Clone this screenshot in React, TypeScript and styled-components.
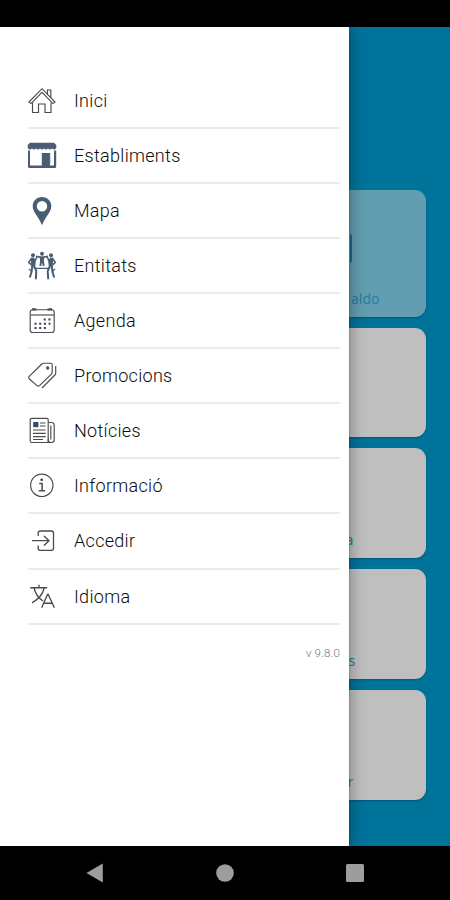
import React from "react";
import styled, { createGlobalStyle } from "styled-components";

const GlobalStyle = createGlobalStyle`
  * { box-sizing: border-box; }
  body { margin: 0; background: #000; font-family: Roboto, "Noto Sans", sans-serif; }
`;

const Screen = styled.div`
  display: flex;
  flex-direction: column;
  width: 450px;
  height: 900px;
  background: #000;
  overflow: hidden;
`;

const StatusBar = styled.header`
  flex: 0 0 27px;
`;

const Main = styled.main`
  display: flex;
  flex: 0 0 819.4px;
  overflow: hidden;
  background: #00739b;
`;

const Drawer = styled.nav`
  position: relative;
  z-index: 1;
  flex: 0 0 349px;
  padding: 46.8px 9px 0 28px;
  background: #fff;
  box-shadow: 0 0 16px rgba(0, 0, 0, 0.38), 0 0 2px rgba(0, 0, 0, 0.3);
`;

const Menu = styled.ul`
  margin: 0;
  padding: 0;
  list-style: none;
`;

const MenuRow = styled.li`
  display: flex;
  align-items: center;
  gap: 18px;
  height: 55.08px;
  padding-top: 1px;
  border-bottom: 2px solid #ebebeb;
`;

const Icon = styled.svg`
  flex: none;
  width: 28px;
  height: 28px;
  overflow: visible;
  fill: none;
  stroke: #4b4b4b;
  stroke-width: 1.15;
`;

const Label = styled.span`
  color: #0c0c0c;
  font-size: 18px;
  font-weight: 300;
  line-height: 24px;
  letter-spacing: 0.3px;
`;

const Version = styled.div`
  margin-top: 20.5px;
  color: #777;
  font-size: 11.5px;
  font-weight: 300;
  line-height: 16px;
  letter-spacing: 0.15px;
  text-align: right;
`;

const Cards = styled.section`
  display: flex;
  flex: 1;
  flex-direction: column;
  gap: 11px;
  padding-top: 163.3px;
`;

const Card = styled.article<{ $featured?: boolean }>`
  display: flex;
  flex-direction: column;
  justify-content: flex-end;
  width: 76.5px;
  height: ${(p) => (p.$featured ? 126.5 : 109.7)}px;
  padding: 0 0 9px 1px;
  border-radius: 0 11px 11px 0;
  background: ${(p) => (p.$featured ? "#639db1" : "#bfbfbf")};
  box-shadow: 0 1px 2px rgba(0, 35, 60, 0.35);
`;

const CardMark = styled.i`
  width: 2px;
  height: 29px;
  margin-bottom: 26px;
  border-radius: 0 2px 2px 0;
  background: #126f91;
`;

const CardLabel = styled.span<{ $featured?: boolean; $shift: number }>`
  margin-left: ${(p) => p.$shift}px;
  color: ${(p) => (p.$featured ? "#277f9e" : "#267c9b")};
  font-family: "Noto Sans", sans-serif;
  font-size: 14px;
  line-height: 19px;
`;

const NavBar = styled.footer`
  display: flex;
  flex: 1;
  align-items: center;
  justify-content: center;
  gap: 112px;
`;

const NavGlyph = styled.svg`
  width: 18px;
  height: 20px;
  fill: #9d9d9d;
`;

const Home = () => (
  <>
    <path d="M1 15 14 1.7 27 15l-2 1.6L14 5.3 3 16.6Z" />
    <path d="M4.5 15.5V25.5h6v-8.5h6.5v8.5h6V15.5M19.5 7.5V3h3.3v8" />
  </>
);

const Store = () => (
  <g fill="#4b5d73" stroke="none">
    <path d="M2 .7h24l2.3 2.2v2.7a2.3 2.3 0 0 1-4.3.7 2.2 2.2 0 0 1-4 0 2.2 2.2 0 0 1-4 0 2.2 2.2 0 0 1-4 0 2.2 2.2 0 0 1-4 0 2.2 2.2 0 0 1-4 0A2.3 2.3 0 0 1-.3 5.6V2.9Z" />
    <path fillRule="evenodd" d="M0 8.5h2v15h11.8V11H22v12.5h4V8.5h2.2v16a1.5 1.5 0 0 1-1.5 1.5H1.5A1.5 1.5 0 0 1 0 24.5Z" />
    <path stroke="#b7c0ca" strokeWidth=".8" d="M22.3 11v11" />
  </g>
);

const Pin = () => (
  <path
    fill="#4b5d73"
    stroke="none"
    fillRule="evenodd"
    d="M14 0c5.3 0 9.3 4 9.3 9.2 0 6.4-5.7 9.4-9.3 19-3.6-9.6-9.3-12.6-9.3-19C4.7 4 8.7 0 14 0Zm0 4a5.2 5.2 0 1 0 0 10.4A5.2 5.2 0 0 0 14 4Z"
  />
);

const People = () => (
  <g stroke="#4b5d73" strokeLinejoin="round">
    <g fill="#4b5d73" stroke="none">
      <circle cx="14" cy="1.7" r="2" />
      <circle cx="5" cy="3.3" r="2" />
      <circle cx="23" cy="3.3" r="2" />
      <path d="M11.5 4.2h5l-.6 4.8.7 5h-1.8L14 10.5l-.8 3.5h-1.8l.7-5ZM2.5 5.8l3.3-.2 2 3.4-.5 5-4 1.2L3 10ZM25.5 5.8l-3.3-.2-2 3.4.5 5 4 1.2L25 10Z" />
    </g>
    <path strokeWidth="1.6" d="m12 5-4-.8M16 5l4-.8M3 7l-2.3 3.4L3.4 13M25 7l2.3 3.4-2.7 2.6M7 9.2l2-5M21 9.2l-2-5" />
    <path strokeWidth="2" d="m4.3 14-.8 6-1.7 5.5M6 14l2.3 5-.5 8.3M23.7 14l.8 6 1.7 5.5M22 14l-2.3 5 .5 8.3" />
    <path strokeWidth="1.2" d="M7 16.3h14M4 20 .9 16.8M24 20l3.1-3.2" />
  </g>
);

const Calendar = () => (
  <>
    <rect x="2.2" y="2.7" width="24" height="22.8" rx="2.5" />
    <path d="M2.5 8h23.5" />
    <path strokeWidth="1.8" d="M5.5.9v2.5M22.5.9v2.5M4 2.5h4.5M19.5 2.5H24" />
    <g stroke="#354052" strokeWidth="2" strokeDasharray="2 2.7">
      <path d="M15.7 12.5h7M6.5 16.8h16M6.5 21h11.5" />
    </g>
  </>
);

const Tags = () => (
  <g strokeLinejoin="round">
    <path d="M15.5 1.2h7q1.6 0 1.7 1.6v7.5q0 1-.8 1.8L11.5 23.6q-1.3 1.2-2.5 0L1.2 16.8q-1.2-1.2 0-2.4L13.8 2Z" />
    <path d="M27.7 4v7.2q0 1-.8 1.8L14 26" />
    <circle cx="19.7" cy="6" r="1.1" fill="#4b4b4b" />
  </g>
);

const News = () => (
  <>
    <rect x="2.2" y="1.3" width="18" height="24.2" rx="1.5" />
    <path d="M20.2 5.5h3.3q2.7 0 2.7 2.7v14.6q0 2.7-2.7 2.7H5M20.2 22q0 3.5 2.8 3.5M22.8 8.5v14" />
    <path fill="#354b65" stroke="none" d="M5.2 5h5.2v5.2H5.2Z" />
    <path d="M12 6h5.5M12 9h5.5M5 13h12.7M5 16.3h12.7M5 19.6h12.7M5 22.5h10" />
  </>
);

const Info = () => (
  <>
    <circle cx="13.8" cy="13.3" r="11.2" />
    <circle cx="13.7" cy="7.7" r="1.3" fill="#333" stroke="none" />
    <path strokeWidth="1.5" d="M11.2 11.5h2.9v7M10.8 18.7h6.2" />
  </>
);

const Login = () => (
  <g strokeWidth="1.3" strokeLinecap="round" strokeLinejoin="round">
    <path d="M10.2 8.5V6q0-2 2-2h11.3q2 0 2 2v15.3q0 2-2 2H12.2q-2 0-2-2V19M4.5 13.7h16.5M16.3 9.2l4.7 4.5-4.7 4.5" />
  </g>
);

const Language = () => (
  <g strokeWidth="1.35">
    <path d="M2.2 4.7h17M11 1.8v2.9M6 5c1.5 6 5 10.5 9 13M16.2 5C14.8 11.3 10.8 16 4 19.8" />
    <path d="m13.7 24.7 5.8-13.2h.7L26.4 24.7M15.5 20.2h9" />
  </g>
);

const items = [
  { label: "Inici", Glyph: Home },
  { label: "Establiments", Glyph: Store },
  { label: "Mapa", Glyph: Pin },
  { label: "Entitats", Glyph: People },
  { label: "Agenda", Glyph: Calendar },
  { label: "Promocions", Glyph: Tags },
  { label: "Notícies", Glyph: News },
  { label: "Informació", Glyph: Info },
  { label: "Accedir", Glyph: Login },
  { label: "Idioma", Glyph: Language },
];

const cards = [
  { label: "aldo", shift: 1, featured: true },
  { label: "", shift: 0 },
  { label: "a", shift: -4.5 },
  { label: "s", shift: -1.5 },
  { label: "r", shift: -2.5 },
];

export default function App() {
  return (
    <Screen>
      <GlobalStyle />
      <StatusBar />
      <Main>
        <Drawer>
          <Menu>
            {items.map(({ label, Glyph }) => (
              <MenuRow key={label}>
                <Icon viewBox="0 0 28 28"><Glyph /></Icon>
                <Label>{label}</Label>
              </MenuRow>
            ))}
          </Menu>
          <Version>v 9.8.0</Version>
        </Drawer>
        <Cards>
          {cards.map(({ label, shift, featured }, index) => (
            <Card key={index} $featured={featured}>
              {featured && <CardMark />}
              <CardLabel $featured={featured} $shift={shift}>{label}</CardLabel>
            </Card>
          ))}
        </Cards>
      </Main>
      <NavBar>
        <NavGlyph viewBox="0 0 18 20"><path d="M.4 10 16.8.5v19Z" /></NavGlyph>
        <NavGlyph viewBox="0 0 18 20"><circle cx="9" cy="10" r="8.8" /></NavGlyph>
        <NavGlyph viewBox="0 0 18 20"><rect y="1" width="18" height="18" rx="1.5" /></NavGlyph>
      </NavBar>
    </Screen>
  );
}
